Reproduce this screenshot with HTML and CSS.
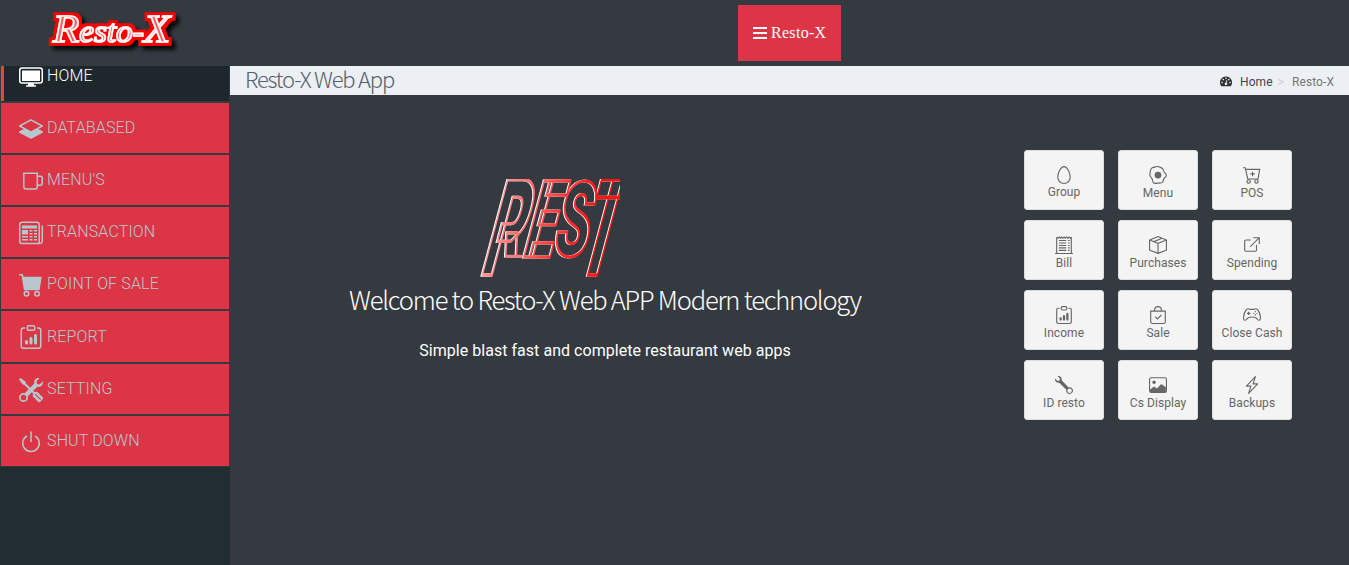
FILE: index.html
```html
<!DOCTYPE html>
<html lang="en">
<head>
<meta charset="utf-8">
<title>Resto-X Web App</title>
<link rel="stylesheet" href="styles.css">
</head>
<body>
<svg class="defs" width="0" height="0">
  <symbol id="clip" viewBox="0 0 16 16"><path d="M4 11a1 1 0 1 1 2 0v1a1 1 0 1 1-2 0v-1zm6-4a1 1 0 1 1 2 0v5a1 1 0 1 1-2 0V7zM7 9a1 1 0 0 1 2 0v3a1 1 0 1 1-2 0V9z"/><path d="M4 1.5H3a2 2 0 0 0-2 2V14a2 2 0 0 0 2 2h10a2 2 0 0 0 2-2V3.5a2 2 0 0 0-2-2h-1v1h1a1 1 0 0 1 1 1V14a1 1 0 0 1-1 1H3a1 1 0 0 1-1-1V3.5a1 1 0 0 1 1-1h1v-1z"/><path d="M9.5 1a.5.5 0 0 1 .5.5v1a.5.5 0 0 1-.5.5h-3a.5.5 0 0 1-.5-.5v-1a.5.5 0 0 1 .5-.5h3zm-3-1A1.5 1.5 0 0 0 5 1.5v1A1.5 1.5 0 0 0 6.5 4h3A1.5 1.5 0 0 0 11 2.5v-1A1.5 1.5 0 0 0 9.500 0h-3z"/></symbol>
</svg>
<header class="topbar">
  <div class="brand">
    <svg class="brand-logo" width="150" height="56" viewBox="0 0 150 56">
      <defs><filter id="halo" x="-15%" y="-30%" width="135%" height="170%">
        <feMorphology in="SourceAlpha" operator="dilate" radius="2.500" result="fat"/>
        <feFlood flood-color="#f00"/><feComposite in2="fat" operator="in" result="red"/>
        <feDropShadow in="red" dx="4" dy="4" stdDeviation="2" flood-color="#000" flood-opacity=".9" result="shade"/>
        <feMerge><feMergeNode in="shade"/><feMergeNode in="SourceGraphic"/></feMerge>
      </filter></defs>
      <text class="script" filter="url(#halo)" x="15" y="42" textLength="117" lengthAdjust="spacingAndGlyphs"><tspan font-size="40">R</tspan><tspan font-size="31">esto-</tspan><tspan font-size="40">X</tspan></text>
    </svg>
  </div>
  <div class="topnav">
    <button class="toggle"><span class="bars"><i></i><i></i><i></i></span><span class="toggle-text">Resto-X</span></button>
  </div>
</header>
<div class="shell">
  <nav class="sidebar">
    <a class="item active"><svg viewBox="0 0 16 16"><rect class="ln" x=".5" y="2" width="15" height="10" rx="1.5"/><path d="M2 3.600h12v7H2zM6 12h4v1.500h1.300v1H4.700v-1H6z"/></svg><span>HOME</span></a>
    <a class="item"><svg viewBox="0 0 16 16"><path d="M8.235 1.559a.5.5 0 0 0-.47 0l-7.5 4a.5.5 0 0 0 0 .882L3.188 8 .264 9.559a.5.5 0 0 0 0 .882l7.5 4a.5.5 0 0 0 .47 0l7.5-4a.5.5 0 0 0 0-.882L12.813 8l2.922-1.559a.5.5 0 0 0 0-.882l-7.5-4zM8 9.433 1.562 6 8 2.567 14.438 6 8 9.433z"/></svg><span>DATABASED</span></a>
    <a class="item"><svg viewBox="0 0 16 16"><path class="ln" d="M3.200 2.800h9v9a1.500 1.500 0 0 1-1.500 1.500h-6a1.500 1.500 0 0 1-1.500-1.500zM12.200 4.800h2a1.300 1.300 0 0 1 1.300 1.300v3.400a1.300 1.300 0 0 1-1.300 1.300h-2"/></svg><span>MENU'S</span></a>
    <a class="item"><svg viewBox="0 0 16 16"><path class="ln" d="M2 .8h10a1.500 1.500 0 0 1 1.500 1.500V15H2a1.500 1.500 0 0 1-1.500-1.500V2.300A1.500 1.500 0 0 1 2 .8zM13.500 15h.5a1.500 1.500 0 0 0 1.500-1.500V3"/><path d="M2 3h10v2H2zM2 6h4v3H2zM2 10h4v1H2zM2 12h4v1H2zM7 6h2v1H7zM10 6h2v1h-2zM7 8h2v1H7zM10 8h2v1h-2zM7 10h2v1H7zM10 10h2v1h-2zM7 12h2v1H7zM10 12h2v1h-2z"/></svg><span>TRANSACTION</span></a>
    <a class="item"><svg viewBox="0 0 16 16"><path d="M.5.700h2l.5 1.800h12.200l-1.500 9H3.300L1.700 1.700H.5a.5.5 0 0 1 0-1z"/><circle class="ln" cx="5" cy="13.800" r="1.500"/><circle class="ln" cx="12" cy="13.800" r="1.500"/></svg><span>POINT OF SALE</span></a>
    <a class="item"><svg viewBox="0 0 16 16"><use href="#clip"/></svg><span>REPORT</span></a>
    <a class="item"><svg viewBox="0 0 16 16"><path fill-rule="evenodd" d="M1 0 0 1l2.200 3.081a1 1 0 0 0 .815.419h.07a1 1 0 0 1 .708.293l2.675 2.675-2.617 2.654A3.003 3.003 0 0 0 0 13a3 3 0 1 0 5.878-.851l2.654-2.617.968.968-.305.914a1 1 0 0 0 .242 1.023l3.356 3.356a1 1 0 0 0 1.414 0l1.586-1.586a1 1 0 0 0 0-1.414l-3.356-3.356a1 1 0 0 0-1.023-.242L10.500 9.500l-.96-.96 2.680-2.643A3.005 3.005 0 0 0 16 3c0-.269-.035-.53-.102-.777l-2.140 2.141L12 4l-.364-1.757L13.777.102a3 3 0 0 0-3.675 3.680L7.462 6.460 4.793 3.793a1 1 0 0 1-.293-.707v-.071a1 1 0 0 0-.419-.814L1 0zM3 11.100a1.900 1.900 0 1 1 0 3.800 1.900 1.900 0 0 1 0-3.800zM11 10.500l3.700 3.700-.5.500-3.700-3.700z"/></svg><span>SETTING</span></a>
    <a class="item"><svg viewBox="0 0 16 16"><path d="M7.500 1v7h1V1h-1z"/><path d="M3 8.812a4.999 4.999 0 0 1 2.578-4.375l-.485-.874A6 6 0 1 0 11 3.616l-.501.865A5 5 0 1 1 3 8.812z"/></svg><span>SHUT DOWN</span></a>
  </nav>
  <div class="content">
    <div class="crumbbar">
      <h1>Resto-X Web App</h1>
      <div class="crumbs">
        <svg width="12" height="11" viewBox="0 0 12 11"><path fill="currentColor" d="M6 .5a6 6 0 0 0-5.100 9.200q.3.500.9.500h8.400q.6 0 .9-.5A6 6 0 0 0 6 .5z"/><g fill="#ecf0f5"><circle cx="2" cy="6.500" r=".8"/><circle cx="3.200" cy="3.600" r=".8"/><circle cx="6" cy="2.300" r=".8"/><circle cx="8.900" cy="3.600" r=".8"/><circle cx="10" cy="6.500" r=".8"/><path d="M6.600 3.800l.7.2-.6 2.700a1.300 1.300 0 1 1-.8-.2z"/></g></svg>
        <span class="home">Home</span><span class="sep">&gt;</span><span>Resto-X</span>
      </div>
    </div>
    <main class="main">
      <section class="hero">
        <svg class="rest" width="140" height="98" viewBox="0 0 140 98">
          <defs>
            <linearGradient id="g1" x1="0" x2="1"><stop offset="0" stop-color="#ff9c9c"/><stop offset="1" stop-color="#ff5c5c"/></linearGradient>
            <linearGradient id="g2" x1="0" x2="1"><stop offset="0" stop-color="#ff6c6c"/><stop offset="1" stop-color="#ff3030"/></linearGradient>
            <linearGradient id="g3" x1="0" x2="1"><stop offset="0" stop-color="#ff4040"/><stop offset="1" stop-color="#ff1010"/></linearGradient>
            <clipPath id="leg"><path d="M-5-105H60V-18H17V5H-5z"/></clipPath>
          </defs>
          <g class="rest-art">
            <g transform="translate(1 96) skewX(-15)"><g clip-path="url(#leg)"><text stroke="url(#g1)" transform="scale(.43 1)" x="-4" font-size="134">R</text></g><path d="M19-18.800H36" stroke="#ff7c7c"/></g>
            <text stroke="url(#g2)" transform="translate(41 77.500) skewX(-15) scale(.5 1)" font-size="107">E</text>
            <text stroke="url(#g3)" transform="translate(71 76.500) skewX(-12) scale(.54 1)" font-size="104">S</text>
            <text stroke="#ff1414" transform="translate(95 96) skewX(-15) scale(.42 1)" font-size="134">T</text>
          </g>
        </svg>
        <h2>Welcome to Resto-X Web APP Modern technology</h2>
        <p>Simple blast fast and complete restaurant web apps</p>
      </section>
      <section class="tiles">
        <a class="tile first"><svg viewBox="0 0 16 16"><path d="M8 15a5 5 0 0 1-5-5c0-1.956.69-4.286 1.742-6.120.524-.913 1.112-1.658 1.704-2.164C7.044 1.206 7.572 1 8 1c.428 0 .956.206 1.554.716.592.506 1.180 1.251 1.704 2.164C12.310 5.714 13 8.044 13 10a5 5 0 0 1-5 5zm0 1a6 6 0 0 0 6-6c0-4.314-3-10-6-10S2 5.686 2 10a6 6 0 0 0 6 6z"/></svg><span>Group</span></a>
        <a class="tile"><svg viewBox="0 0 16 16"><circle cx="8" cy="8" r="3"/><path class="ln" d="M2.800 1.500c1.800-.2 2.500-.7 4.200-1s2.800.8 4.100 1.200c1.500.4 1.700 1.800 2.200 3.300.4 1.100 2.100 1.800 2.100 3.300 0 1.800-1.600 2-2.200 3-.7 1.400-.2 2.300-1.400 3.300-1.300 1.100-2.600.4-3.900.6-1.200.2-2 .4-3.200 0-1.800-.5-1.400-2-1.800-3.400C2.600 10.600 1.200 9.800.9 8.500c-.3-1.300.1-2.200.2-3.300C1.300 4 1.400 1.900 2.800 1.500z"/></svg><span>Menu</span></a>
        <a class="tile"><svg viewBox="0 0 16 16"><path class="ln" d="M0 1.500h2l2.200 10h9.200l1.400-8.500H2.500M8.500 5v4M6.500 7h4"/><circle class="ln" cx="5" cy="13.700" r="1.500"/><circle class="ln" cx="12" cy="13.700" r="1.500"/></svg><span>POS</span></a>
        <a class="tile"><svg viewBox="0 0 16 16"><path class="ln" d="M1.500 15V1M14.500 15V1M0 15.500h16M3.500 4H10M3.500 6.200H10M3.500 8.400H10M3.500 10.600H10M3.500 12.800H10M11.500 4h1.500M11.500 6.200h1.500M11.500 8.400h1.500M11.500 10.600h1.500M11.500 12.800h1.500M1.500 1l1.100 1L3.700 1l1.100 1 1.100-1L7 2l1.100-1 1.100 1 1.100-1 1.100 1 1.100-1 1.100 1 1-1"/></svg><span>Bill</span></a>
        <a class="tile"><svg viewBox="0 0 16 16"><path fill-rule="evenodd" d="M8.186 1.113a.5.5 0 0 0-.372 0L1.846 3.500l2.404.961L10.404 2l-2.218-.887zm3.564 1.426L5.596 5 8 5.961 14.154 3.500l-2.404-.961zm3.250 1.700-6.500 2.600v7.922l6.500-2.600V4.240zM7.500 14.762V6.838L1 4.239v7.923l6.500 2.600zM7.443.184a1.500 1.500 0 0 1 1.114 0l7.129 2.852A.5.5 0 0 1 16 3.500v8.662a1 1 0 0 1-.629.928l-7.185 2.874a.5.5 0 0 1-.372 0L.63 13.090a1 1 0 0 1-.63-.928V3.500a.5.5 0 0 1 .314-.464L7.443.184z"/></svg><span>Purchases</span></a>
        <a class="tile"><svg viewBox="0 0 16 16"><path class="ln" d="M7 3.500H2.500a1 1 0 0 0-1 1v8a1 1 0 0 0 1 1h8.500a1 1 0 0 0 1-1V8M6.500 9.500l8-8M9 1.500h5.500V7"/></svg><span>Spending</span></a>
        <a class="tile"><svg viewBox="0 0 16 16"><use href="#clip"/></svg><span>Income</span></a>
        <a class="tile"><svg viewBox="0 0 16 16"><path class="ln" d="M1.500 4.500h13V14a1.500 1.500 0 0 1-1.500 1.500H3A1.500 1.500 0 0 1 1.500 14zM5 4.500V3.500a3 3 0 0 1 6 0v1M5.500 9.500l2 2 3.500-3.500"/></svg><span>Sale</span></a>
        <a class="tile"><svg viewBox="0 0 16 16"><path class="ln" d="M3 3.300C4.200 2.100 5.100 2.300 6 3h4c.9-.7 1.800-.9 3 .3 1.200 1.500 2.800 5.300 2.400 8.200-.1 1.500-1.700 1.500-2.400.5C11.800 10 10.500 9.800 8 9.800S4.200 10 3 12c-.7 1-2.300 1-2.400-.5C.2 8.600 1.800 4.800 3 3.300zM5 5v3M3.500 6.500h3"/><circle cx="11" cy="5" r=".6"/><circle cx="11" cy="8" r=".6"/><circle cx="9.500" cy="6.500" r=".6"/><circle cx="12.500" cy="6.500" r=".6"/></svg><span>Close Cash</span></a>
        <a class="tile"><svg viewBox="0 0 16 16"><path fill-rule="evenodd" d="M.102 2.223A3.004 3.004 0 0 0 3.780 5.897l6.341 6.252A3.003 3.003 0 0 0 13 16a3 3 0 1 0-.851-5.878L5.897 3.781A3.004 3.004 0 0 0 2.223.1l2.141 2.142L4 4l-1.757.364L.102 2.223zM13 11a2 2 0 1 1 0 4 2 2 0 0 1 0-4z"/></svg><span>ID resto</span></a>
        <a class="tile"><svg viewBox="0 0 16 16"><rect class="ln" x=".5" y="1.500" width="15" height="13" rx="1.500"/><circle cx="4.500" cy="5.500" r="1.500"/><path d="M1 12l3.500-2.700L7 11l4-3.800L15 10v4.500H1z"/></svg><span>Cs Display</span></a>
        <a class="tile"><svg viewBox="0 0 16 16"><path d="M11.251.068a.5.5 0 0 1 .227.58L9.677 6.500H13a.5.5 0 0 1 .364.843l-8 8.500a.5.5 0 0 1-.842-.49L6.323 9.500H3a.5.5 0 0 1-.364-.843l8-8.500a.5.5 0 0 1 .615-.09zM4.157 8.500H7a.5.5 0 0 1 .478.647L6.110 13.590l5.732-6.090H9a.5.5 0 0 1-.478-.647L9.890 2.410 4.157 8.500z"/></svg><span>Backups</span></a>
      </section>
    </main>
  </div>
</div>
</body>
</html>
```
FILE: styles.css
```css
* { box-sizing: border-box; }
body { margin: 0; height: 565px; overflow: hidden; display: flex; flex-direction: column; background: #343a40; font-family: Roboto, sans-serif; }
.defs { display: none; }
.topbar { display: flex; height: 66px; flex: none; background: #343a40; }
.brand { width: 230px; padding-left: 38px; }
.brand-logo { display: block; }
.script { font-family: "Liberation Serif", serif; font-style: italic; font-weight: 400; fill: #ff6060; stroke: #fff; stroke-width: 1.6px; }
.topnav { flex: 1; display: flex; justify-content: center; padding-top: 5px; }
.toggle { width: 103px; height: 56px; border: 0; padding: 0 0 0 15px; background: #dc3545; color: #fff; display: flex; align-items: center; gap: 4px; font: 16px "Liberation Serif", serif; }
.toggle-text { letter-spacing: .3px; }
.bars { width: 14px; display: grid; gap: 3px; }
.bars i { height: 2px; background: #fff; }
.shell { flex: 1; display: flex; min-height: 0; }
.sidebar { width: 230px; background: #222d32; overflow: hidden; }
.item { display: flex; align-items: center; gap: 4px; height: 52.15px; padding-left: 18px; border: 1px solid #343a40; background: #dc3545; color: #b8c7ce; font-size: 16px; font-weight: 300; letter-spacing: .15px; }
.item svg { width: 24px; height: 24px; fill: currentColor; margin-top: 2px; overflow: visible; flex: none; }
.item span { line-height: 20px; margin-top: .2px; }
.item.active { margin-top: -16.3px; background: #1e282c; color: #fff; padding-left: 15px; }
.item.active::before { content: ""; width: 3px; align-self: stretch; background: #dd4b39; margin: 0 -4px 0 -15px; }
.item.active svg { margin-left: 15px; }
.ln { fill: none; stroke: currentColor; stroke-width: 1; }
.content { flex: 1; min-width: 0; }
.crumbbar { height: 29px; background: #ecf0f5; display: flex; justify-content: space-between; align-items: center; padding: 0 15px; }
h1 { margin: -4px 0 0; font: 300 22px/29px "Noto Sans CJK JP", "Noto Sans", sans-serif; letter-spacing: -1.2px; color: #56606a; white-space: nowrap; }
.crumbs { display: flex; align-items: center; font-size: 12px; letter-spacing: .08px; color: #777; padding-top: 2px; }
.crumbs svg { color: #333; margin-right: 8px; }
.home { color: #444; }
.sep { color: #ccc; margin: 0 8px 0 5px; }
.main { display: flex; justify-content: space-between; padding-right: 57px; }
.hero { width: 750px; padding-top: 84px; display: flex; flex-direction: column; align-items: center; color: #fff; }
.rest { display: block; margin-right: 111px; overflow: hidden; }
.rest text { font-family: Roboto, sans-serif; font-weight: 900; }
.rest-art { fill: none; stroke-width: 2.6px; filter: drop-shadow(-.7px 0 0 #fff); }
.rest-art text, .rest-art path { vector-effect: non-scaling-stroke; }
h2 { margin: 6px 0 0; font: 300 25.500px/32px "Noto Sans CJK JP", "Noto Sans", sans-serif; letter-spacing: -1.2px; white-space: nowrap; }
p { margin: 25px 0 0; font-size: 16px; line-height: 22px; letter-spacing: .04px; }
.tiles { display: grid; grid-template-columns: repeat(3, 80px); grid-auto-rows: 60px; gap: 10px 14px; margin-top: 55px; }
.tile { background: #f4f4f4; border: 1px solid #ddd; border-radius: 3px; color: #666; font-size: 12px; display: flex; flex-direction: column; align-items: center; padding-top: 15px; white-space: nowrap; }
.tile svg { width: 18px; height: 18px; fill: currentColor; flex: none; }
.tile span { line-height: 17px; margin-top: 1px; letter-spacing: .06px; }
.tile.first span { margin-top: 0; }
```
